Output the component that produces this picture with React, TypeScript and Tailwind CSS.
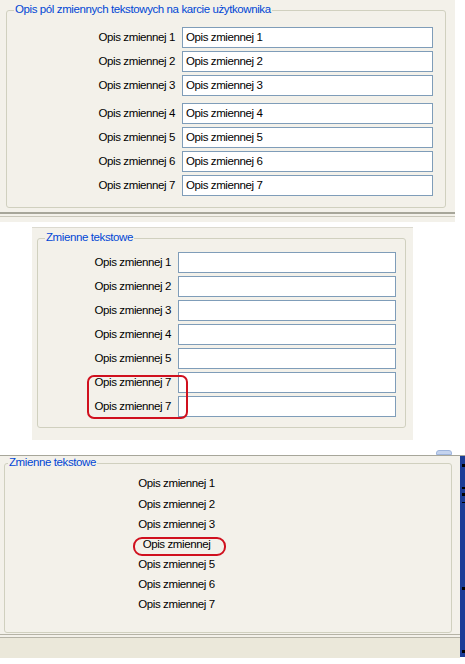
import React from "react";

const font = { fontFamily: '"Liberation Sans", Arial, sans-serif' };

function Row({ label, value, labelW, inputW }: { label: string; value?: string; labelW: string; inputW: string }) {
  return (
    <div className="flex items-center">
      <div className={`${labelW} text-right text-[11.5px] tracking-[-0.4px] leading-none text-black pr-[7px]`}>{label}</div>
      <div className={`${inputW} h-[21px] border border-[#7f9db9] bg-white flex items-center pl-[3px] text-[11.5px] tracking-[-0.4px] leading-none text-black`}>
        {value}
      </div>
    </div>
  );
}

export default function App() {
  const r = [1, 2, 3, 4, 5, 6, 7];
  return (
    <div className="w-[465px] h-[664px] bg-white overflow-hidden relative" style={font}>
      {/* Section 1 */}
      <div className="w-[455px] h-[222px] bg-[#f3f1ea] pt-[10px] pl-[6px] flex flex-col">
        <div className="relative w-[440px] h-[198px] border border-[#d0d0bf] rounded-[3px]">
          <div className="absolute left-[7px] -top-[7px] px-[1px] bg-[#f3f1ea] text-[11.5px] tracking-[-0.4px] leading-none text-[#0046d5]">
            Opis pól zmiennych tekstowych na karcie użytkownika
          </div>
          <div className="flex flex-col pt-[16px]">
            <div className="flex flex-col gap-[3px]">
              {r.slice(0, 3).map((i) => (
                <Row key={i} label={`Opis zmiennej ${i}`} value={`Opis zmiennej ${i}`} labelW="w-[175px]" inputW="w-[251px]" />
              ))}
            </div>
            <div className="flex flex-col gap-[3px] mt-[7px]">
              {r.slice(3).map((i) => (
                <Row key={i} label={`Opis zmiennej ${i}`} value={`Opis zmiennej ${i}`} labelW="w-[175px]" inputW="w-[251px]" />
              ))}
            </div>
          </div>
        </div>
        <div className="mt-[4px] -ml-[6px] w-[455px] h-[2px] bg-[#a7a69a]" />
        <div className="mt-[2px] -ml-[6px] w-[455px] h-[1px] bg-[#c9c7ba]" />
      </div>

      {/* Section 2 */}
      <div className="ml-[32px] mt-[5px] w-[381px] h-[213px] bg-[#f3f1ea] border-t border-[#dcdad0] pt-[10px] pl-[5px]">
        <div className="relative w-[369px] h-[190px] border border-[#d0d0bf] rounded-[3px]">
          <div className="absolute left-[7px] -top-[7px] px-[1px] bg-[#f3f1ea] text-[11.5px] tracking-[-0.4px] leading-none text-[#0046d5]">
            Zmienne tekstowe
          </div>
          <div className="flex flex-col gap-[3px] pt-[13px]">
            {[1, 2, 3, 4, 5].map((i) => (
              <Row key={i} label={`Opis zmiennej ${i}`} labelW="w-[140px]" inputW="w-[218px]" />
            ))}
            {[7, 7].map((i, k) => (
              <Row key={"b" + k} label={`Opis zmiennej ${i}`} labelW="w-[140px]" inputW="w-[218px]" />
            ))}
          </div>
          <div className="absolute left-[49px] top-[136px] w-[101px] h-[44px] border-2 border-[#d0101e] rounded-[7px]" />
        </div>
      </div>

      {/* Section 3 */}
      <div className="mt-[15px] relative w-[465px] h-[201px] bg-[#f3f1ea] border-t border-[#a7a69a]">
        <div className="absolute right-[13px] -top-[6px] w-[16px] h-[5px] rounded-t-[3px] bg-[#c4d3ee] border border-[#9fb5dc]" />
        <div className="absolute right-0 top-0 w-[5px] h-[201px] bg-[#1c3d97]">
          <div className="mt-[8px] ml-[2px] w-[3px] h-[3px] bg-black" />
          <div className="mt-[20px] ml-[2px] w-[3px] h-[2px] bg-black" />
          <div className="mt-[4px] ml-[2px] w-[3px] h-[3px] bg-black" />
          <div className="mt-[6px] ml-[2px] w-[3px] h-[1px] bg-black" />
          <div className="mt-[84px] ml-[2px] w-[3px] h-[3px] bg-black" />
          <div className="mt-[60px] ml-[2px] w-[3px] h-[3px] bg-black" />
        </div>
        <div className="pt-[7px] pl-[4px]">
          <div className="relative w-[448px] h-[170px] border border-[#d0d0bf] rounded-[3px]">
            <div className="absolute left-[3px] -top-[7px] px-[1px] bg-[#f3f1ea] text-[11.5px] tracking-[-0.4px] leading-none text-[#0046d5]">
              Zmienne tekstowe
            </div>
            <div className="flex flex-col pt-[10px] pl-[125px] w-[218px] items-center">
              {["Opis zmiennej 1", "Opis zmiennej 2", "Opis zmiennej 3", "Opis zmiennej", "Opis zmiennej 5", "Opis zmiennej 6", "Opis zmiennej 7"].map((t, i) => (
                <div key={i} className="h-[20.2px] flex items-center text-[11.5px] tracking-[-0.4px] leading-none text-black whitespace-nowrap">
                  {t}
                </div>
              ))}
            </div>
            <div className="absolute left-[128px] top-[73px] w-[93px] h-[19px] border-2 border-[#d0101e] rounded-[9px]" />
          </div>
        </div>
        <div className="mt-[1px] w-[460px] h-[1px] bg-[#b5b3a6]" />
        <div className="mt-[2px] w-[460px] h-[1px] bg-[#b5b3a6]" />
        <div className="w-[460px] h-[20px] bg-[#ebe8da]" />
      </div>
    </div>
  );
}
